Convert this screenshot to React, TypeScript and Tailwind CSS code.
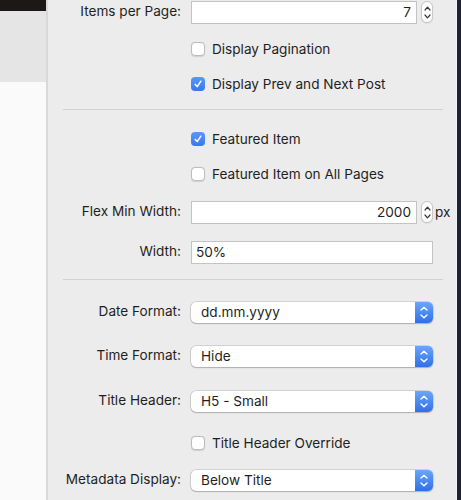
import React from 'react';

// Settings sheet: number fields, checkboxes and popup selects, laid out like a macOS form.

const font = "font-['Inter','Liberation_Sans',sans-serif] text-[13.6px] text-[#1f1f1f]";

const Label: React.FC<{ text?: string }> = ({ text }) => (
  <div className="w-[133px] shrink-0 text-right leading-none">{text}</div>
);

const Row: React.FC<{ label?: string; className?: string; children: React.ReactNode }> = ({ label, className, children }) => (
  <div className={`flex items-center h-[24px] ${className ?? ''}`}>
    <Label text={label} />
    <div className="ml-[10px] flex items-center">{children}</div>
  </div>
);

const Stepper: React.FC = () => (
  <div className="ml-[4px] w-[12px] h-[22px] rounded-[6px] bg-white border border-[#c8c8c8] shadow-[0_0.5px_1px_rgba(0,0,0,0.15)] flex flex-col items-center justify-center gap-[3px]">
    <svg width="7" height="5" viewBox="0 0 7 5">
      <path d="M1 4 L3.5 1.2 L6 4" fill="none" stroke="#333" strokeWidth="1.2" strokeLinecap="round" strokeLinejoin="round" />
    </svg>
    <svg width="7" height="5" viewBox="0 0 7 5">
      <path d="M1 1 L3.5 3.8 L6 1" fill="none" stroke="#333" strokeWidth="1.2" strokeLinecap="round" strokeLinejoin="round" />
    </svg>
  </div>
);

const NumberField: React.FC<{ value: string; unit?: string }> = ({ value, unit }) => (
  <>
    <div className="w-[226px] h-[23px] bg-white border border-[#c3c3c3] flex items-center justify-end pr-[5px]">{value}</div>
    <Stepper />
    {unit && <span className="ml-[2px]">{unit}</span>}
  </>
);

const TextField: React.FC<{ value: string }> = ({ value }) => (
  <div className="w-[242px] h-[23px] bg-white border border-[#c3c3c3] flex items-center pl-[4px]">{value}</div>
);

const Select: React.FC<{ value: string }> = ({ value }) => (
  <div className="w-[242px] h-[21px] bg-white rounded-[5px] shadow-[0_0_0_0.5px_rgba(0,0,0,0.22),0_1px_1.5px_rgba(0,0,0,0.18)] flex items-center overflow-hidden">
    <span className="flex-1 pl-[10px]">{value}</span>
    <div className="w-[18px] h-full bg-gradient-to-b from-[#6aa6fb] to-[#2f6fe9] flex flex-col items-center justify-center gap-[3px]">
      <svg width="8" height="5" viewBox="0 0 8 5">
        <path d="M1 4 L4 1.2 L7 4" fill="none" stroke="#fff" strokeWidth="1.4" strokeLinecap="round" strokeLinejoin="round" />
      </svg>
      <svg width="8" height="5" viewBox="0 0 8 5">
        <path d="M1 1 L4 3.8 L7 1" fill="none" stroke="#fff" strokeWidth="1.4" strokeLinecap="round" strokeLinejoin="round" />
      </svg>
    </div>
  </div>
);

const Checkbox: React.FC<{ checked?: boolean; label: string }> = ({ checked, label }) => (
  <div className="flex items-center gap-[7px]">
    {checked ? (
      <div className="w-[14px] h-[14px] rounded-[4px] bg-gradient-to-b from-[#5b97f8] to-[#3677f2] flex items-center justify-center">
        <svg width="10" height="10" viewBox="0 0 10 10">
          <path d="M2.2 5.4 L4.2 7.6 L7.9 2.2" fill="none" stroke="#fff" strokeWidth="1.5" strokeLinecap="round" strokeLinejoin="round" />
        </svg>
      </div>
    ) : (
      <div className="w-[14px] h-[14px] rounded-[4px] bg-white border border-[#bdbdbd] shadow-[0_0.5px_1px_rgba(0,0,0,0.12)]" />
    )}
    <span>{label}</span>
  </div>
);

const Separator: React.FC<{ className?: string }> = ({ className }) => (
  <div className={`ml-[15px] mr-[13px] h-[1px] bg-[#d2d2d2] ${className ?? ''}`} />
);

export default function App() {
  return (
    <div className={`w-[461px] h-[500px] flex overflow-hidden bg-[#ececec] ${font}`}>
      {/* page behind the sheet */}
      <div className="w-[46px] shrink-0 flex flex-col">
        <div className="h-[11px] bg-[#1c1818]" />
        <div className="h-[71px] bg-[#e5e5e5]" />
        <div className="flex-1 bg-[#fafafa]" />
      </div>
      <div className="w-[2px] shrink-0 bg-[#d9d9d9]" />

      <div className="flex-1 flex flex-col">
        <Row label="Items per Page:">
          <NumberField value="7" />
        </Row>
        <Row className="mt-[13px]">
          <Checkbox label="Display Pagination" />
        </Row>
        <Row className="mt-[11px]">
          <Checkbox checked label="Display Prev and Next Post" />
        </Row>
        <Separator className="mt-[13px]" />

        <Row className="mt-[17px]">
          <Checkbox checked label="Featured Item" />
        </Row>
        <Row className="mt-[11px]">
          <Checkbox label="Featured Item on All Pages" />
        </Row>
        <Row label="Flex Min Width:" className="mt-[14px]">
          <NumberField value="2000" unit="px" />
        </Row>
        <Row label="Width:" className="mt-[16px]">
          <TextField value="50%" />
        </Row>
        <Separator className="mt-[15px]" />

        <Row label="Date Format:" className="mt-[20px]">
          <Select value="dd.mm.yyyy" />
        </Row>
        <Row label="Time Format:" className="mt-[20px]">
          <Select value="Hide" />
        </Row>
        <Row label="Title Header:" className="mt-[21px]">
          <Select value="H5 - Small" />
        </Row>
        <Row className="mt-[18px]">
          <Checkbox label="Title Header Override" />
        </Row>
        <Row label="Metadata Display:" className="mt-[13px]">
          <Select value="Below Title" />
        </Row>
      </div>

      {/* window edge */}
      <div className="w-[1px] shrink-0 bg-[#f4f4f4]" />
      <div className="w-[4px] shrink-0 bg-[#1d2433]" />
    </div>
  );
}
